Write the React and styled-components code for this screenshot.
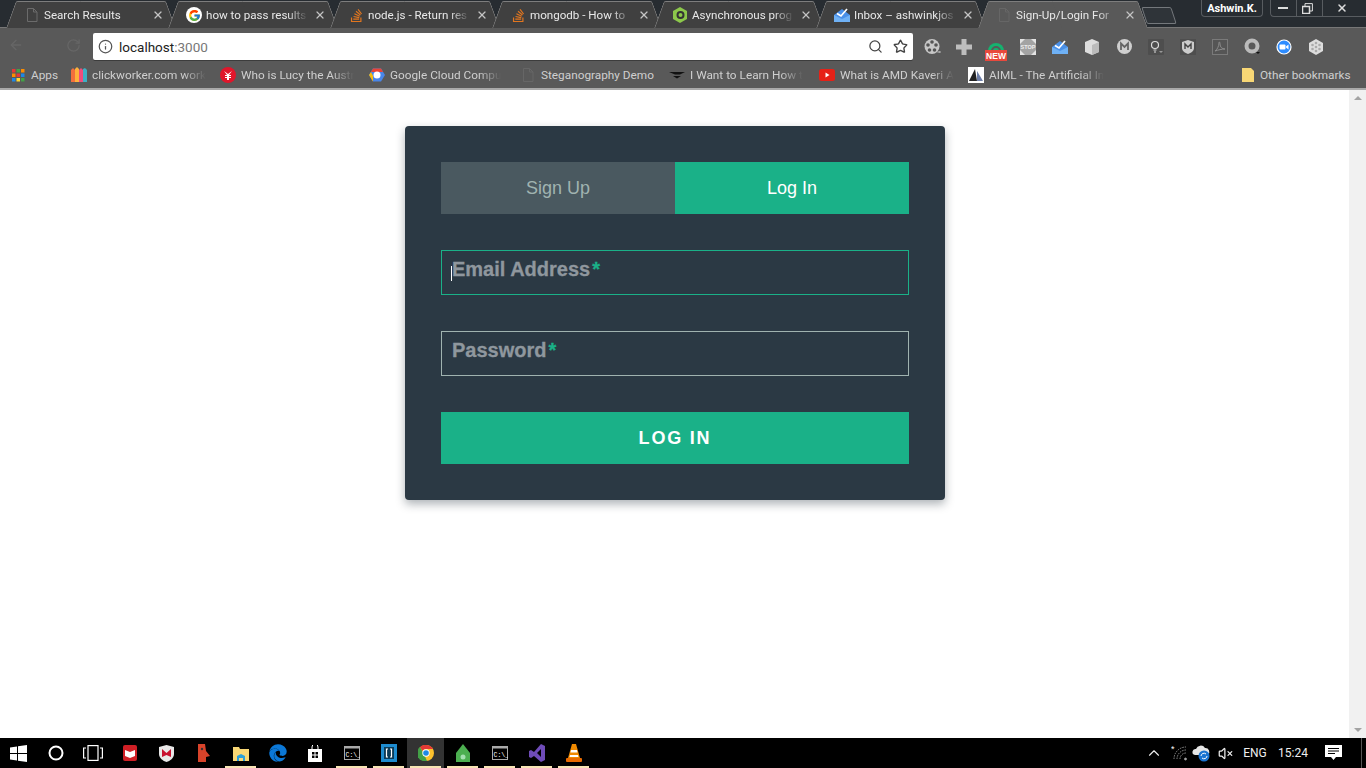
import React from 'react';
import styled, { createGlobalStyle } from 'styled-components';
import { X, Search, Star, Info, ArrowLeft, RotateCw, ChevronUp, VolumeX } from 'lucide-react';
import { FcGoogle } from 'react-icons/fc';
import { FaStackOverflow, FaEdge } from 'react-icons/fa';

const Global = createGlobalStyle`
  html, body { margin: 0; padding: 0; height: 100%; overflow: hidden; background: #fff; }
  * { box-sizing: border-box; }
  body { font-family: Roboto, "Noto Sans", sans-serif; }
`;

const Screen = styled.div`
  width: 1366px; height: 768px; display: grid; grid-template-rows: 28px 34px 28px 1fr 30px; overflow: hidden;
`;

/* ---------- tab strip ---------- */
const Strip = styled.div`
  background: #272c31; display: flex; align-items: stretch; padding-left: 6px; position: relative;
  border-bottom: 1px solid #777;
`;
const TabBox = styled.div`
  position: relative; width: 169px; margin-right: -7px; height: 28px; flex: none;
  display: flex; align-items: center; padding: 2px 0 0 18px; font-size: 11.6px; color: #e8e8e8;
  z-index: ${p => (p.$active ? 3 : 1)};
  &::before, &::after {
    content: ""; position: absolute; top: 1px; bottom: 0; width: 50%; z-index: -1;
    background: ${p => (p.$active ? '#595959' : '#404040')};
    border-top: 1px solid #7d7d7d;
  }
  &::before { left: 5px; transform: skewX(-20deg); border-left: 1px solid #7d7d7d; border-top-left-radius: 2px; }
  &::after { right: 5px; transform: skewX(20deg); border-right: 1px solid #7d7d7d; border-top-right-radius: 2px; }
`;
const TabIcon = styled.span`
  width: 16px; height: 16px; flex: none; margin-right: 4px; display: flex; align-items: center; justify-content: center;
`;
const TabTitle = styled.span`
  width: 102px; flex: none; white-space: nowrap; overflow: hidden; line-height: 16px;
  -webkit-mask-image: linear-gradient(to right, #000 80%, transparent 100%);
  mask-image: linear-gradient(to right, #000 80%, transparent 100%);
`;
const TabClose = styled.span`
  width: 12px; height: 12px; flex: none; margin-left: 6px; display: flex; color: #c4c4c4;
`;
const GoogleDot = styled.span`
  width: 16px; height: 16px; border-radius: 50%; background: #fff; display: flex; align-items: center; justify-content: center;
`;
const NewTab = styled.div`
  width: 30px; height: 17px; margin: 7px 0 0 4px; flex: none; background: #2f3439; border: 1px solid #74787c;
  border-radius: 2px; transform: skewX(18deg);
`;
const Profile = styled.div`
  margin-left: auto; width: 62px; height: 17px; border: 1px solid #585c60; border-top: 0; border-radius: 0 0 4px 4px;
  display: flex; align-items: center; justify-content: center; font-size: 11px; font-weight: 700; color: #fff; flex: none;
`;
const WinControls = styled.div`
  margin-left: 7px; width: 96px; height: 17px; flex: none; display: grid; grid-template-columns: 25px 26px 45px;
  border-left: 1px solid #585c60; border-bottom: 1px solid #585c60; border-radius: 0 0 0 4px;
`;
const WinBtn = styled.div`
  display: flex; align-items: center; justify-content: center; color: #ddd; padding-right: ${p => p.$pr || 0}px;
  & + & { border-left: 1px solid #585c60; }
`;

/* ---------- toolbar ---------- */
const Toolbar = styled.div`
  background: #595959; display: flex; align-items: center; padding-left: 1px;
`;
const NavBtn = styled.div`
  width: 29px; display: flex; justify-content: center; color: #666; flex: none;
`;
const Omnibox = styled.div`
  width: 820px; height: 27px; margin: 5px 0 0 5px; background: #fff; border-radius: 2px; flex: none; align-self: flex-start;
  display: flex; align-items: center; padding: 0 0 0 5px; font-size: 13.5px; color: #222;
  box-shadow: 0 1px 0 #3c3c3c;
`;
const InfoWrap = styled.span`
  width: 16px; height: 16px; display: flex; margin-right: 5px; color: #555;
`;
const Port = styled.span` color: #777; `;
const OmniAction = styled.span`
  width: 25px; display: flex; justify-content: center; color: #444; ${p => p.$push && 'margin-left: auto;'}
`;
const Extensions = styled.div`
  display: flex; margin: 3px 0 0 3px;
`;
const Ext = styled.div`
  width: 32px; height: 24px; display: flex; align-items: center; justify-content: center; flex: none;
`;
const GrammarSvg = styled.svg`
  margin-top: 6px; flex: none;
`;

/* ---------- bookmarks ---------- */
const Bookmarks = styled.div`
  background: #595959; display: flex; align-items: center; padding: 0 14px 0 11px; font-size: 11.8px; color: #cfcfcf;
  border-bottom: 2px solid #a9a9a9;
`;
const Bookmark = styled.div`
  width: ${p => p.$w}px; flex: none; display: flex; align-items: center; white-space: nowrap; overflow: hidden;
  ${p => p.$end && 'margin-left: auto;'}
`;
const BmIcon = styled.span`
  width: ${p => p.$w || 16}px; height: 16px; flex: none; margin-right: 5px; display: flex; align-items: center; justify-content: center;
`;
const BmLabel = styled.span`
  display: block; overflow: hidden; white-space: nowrap; max-width: ${p => (p.$fade ? '118px' : 'none')};
  ${p => p.$fade && `
    -webkit-mask-image: linear-gradient(to right, #000 80%, transparent 100%);
    mask-image: linear-gradient(to right, #000 80%, transparent 100%);
  `}
`;

/* ---------- content ---------- */
const Viewport = styled.div`
  display: grid; grid-template-columns: 1fr 17px; min-height: 0; background: #fff;
`;
const Page = styled.main`
  display: flex; justify-content: center; align-items: flex-start; padding: 36px 0 0 1px; font-family: "Liberation Sans", Arial, sans-serif;
`;
const Scrollbar = styled.div`
  background: #f1f1f1; display: flex; flex-direction: column; justify-content: space-between; align-items: center; padding: 6px 0;
`;
const Arrow = styled.span`
  width: 0; height: 0; border-left: 4px solid transparent; border-right: 4px solid transparent;
  ${p => (p.$down ? 'border-top: 4px solid #a3a3a3;' : 'border-bottom: 4px solid #a3a3a3;')}
`;
const Card = styled.form`
  width: 540px; height: 374px; padding: 36px; background: #2b3944; border-radius: 4px;
  box-shadow: 0 4px 10px 0 rgba(19, 35, 47, 0.35); display: flex; flex-direction: column; gap: 36px; flex: none;
`;
const TabRow = styled.div`
  display: grid; grid-template-columns: 1fr 1fr;
`;
const FormTab = styled.button`
  height: 52px; border: 0; padding: 0; font: 18px "Liberation Sans", Arial, sans-serif; 
  background: ${p => (p.$active ? '#1ab188' : '#4a5960')};
  color: ${p => (p.$active ? '#ffffff' : '#a0b3b0')};
`;
const Field = styled.div`
  position: relative; height: 45px; border: 1px solid ${p => (p.$focus ? '#1ab188' : '#a0b3b0')};
`;
const FieldLabel = styled.label`
  position: absolute; left: 10px; top: 4px; font-size: 20px; line-height: 28px; font-weight: 700; color: #8f979e;
  -webkit-text-stroke: 0.3px currentColor;
`;
const Req = styled.span` color: #1ab188; margin-left: 2px; `;
const Caret = styled.span`
  position: absolute; left: 9px; top: 15px; width: 1px; height: 15px; background: #fff;
`;
const Submit = styled.button`
  height: 52px; border: 0; padding: 0; background: #1ab188; color: #fff; font: 700 18px "Liberation Sans", Arial, sans-serif;
  letter-spacing: 1.8px; text-transform: uppercase;
`;

/* ---------- taskbar ---------- */
const Taskbar = styled.footer`
  background: #000; display: flex; align-items: stretch; color: #fff; font-size: 12px;
`;
const TaskCell = styled.div`
  width: ${p => p.$w || 37}px; flex: none; position: relative; display: flex; align-items: center; justify-content: center;
  ${p => p.$active && 'background: #333;'}
  ${p => p.$open && `&::after { content: ""; position: absolute; left: 3px; right: 3px; bottom: 0; height: 2px; background: #f7e4b4; }`}
`;
const Tray = styled.div`
  margin-left: auto; display: flex; align-items: center; padding-right: 0;
`;
const TrayCell = styled.div`
  width: ${p => p.$w}px; padding-right: ${p => p.$pr || 0}px; display: flex; align-items: center; justify-content: center; color: #eee; flex: none;
`;
const ShowDesktop = styled.div`
  width: 1px; height: 30px; background: #555; margin: 0 4px 0 13px;
`;

/* ---------- drawings ---------- */
const FileIcon = ({ c = '#6b6b6b' }) => (
  <svg width="14" height="16" viewBox="0 0 14 16" fill="none" stroke={c}><path d="M2.5 1.5h6l3.5 3.5v9.500h-9.500zM8.500 1.500v3.500h3.500" /></svg>
);
const NodeHex = () => (
  <svg width="16" height="16" viewBox="0 0 16 16"><path d="M8 0l7 4v8l-7 4-7-4V4z" fill="#8cc84b" /><circle cx="8.500" cy="8" r="3" fill="none" stroke="#333" strokeWidth="2" /></svg>
);
const InboxIcon = ({ s = 16 }) => (
  <svg width={s} height={s} viewBox="0 0 16 16"><path d="M0 8l8-6 8 6v7H0z" fill="#4a90e8" /><path d="M0 8l8 4 8-4v7H0z" fill="#6fb1f5" /><path d="M3 6.500l4 2.500 6-7" fill="none" stroke="#fff" strokeWidth="1.700" /></svg>
);
const AppsGrid = () => (
  <svg width="13" height="13" viewBox="0 0 13 13">
    {[['#e53935', '#43a047', '#fb8c00'], ['#fb8c00', '#e53935', '#1e88e5'], ['#1e88e5', '#fdd835', '#43a047']].map((r, y) =>
      r.map((c, x) => <rect key={`${x}${y}`} x={x * 4.500} y={y * 4.500} width="3.500" height="3.500" fill={c} />))}
  </svg>
);
const People = () => (
  <svg width="16" height="16" viewBox="0 0 16 16"><path d="M0 15V3l2-2 2 2v12z" fill="#f36f3c" /><path d="M4 15V2l2-2 2 2v13z" fill="#ffb13b" /><path d="M8 15V3l2-2 2 2v12z" fill="#ef4d7c" /><path d="M12 15V2l2-1 2 2v12z" fill="#3dafc4" /></svg>
);
const LucyIcon = () => (
  <svg width="16" height="16" viewBox="0 0 16 16"><circle cx="8" cy="8" r="8" fill="#e0162b" /><path d="M4 4l4 3 4-3-3 4h2v1H9v1h2v1H9v2H7v-2H5v-1h2V9H5V8h2z" fill="#fff" /></svg>
);
const CloudHex = () => (
  <svg width="16" height="16" viewBox="0 0 16 16"><path d="M4 1.500h8L16 8l-4 6.500H4L0 8z" fill="#4a86e8" /><path d="M4 1.500h8L14 5H2z" fill="#ea4335" /><path d="M0 8l2-3 2 4 0 5.500z" fill="#fbbc05" /><circle cx="8" cy="8" r="3.500" fill="#fff" /></svg>
);
const WantIcon = () => (
  <svg width="16" height="16" viewBox="0 0 16 16"><path d="M0 5h16l-5 2.500H6z" fill="#111" /><path d="M4 9h8l-4 2.500z" fill="#111" /></svg>
);
const YtIcon = () => (
  <svg width="16" height="12" viewBox="0 0 16 12"><rect width="16" height="12" rx="2.500" fill="#e62117" /><path d="M6.500 3.500l4 2.500-4 2.500z" fill="#fff" /></svg>
);
const AimlIcon = () => (
  <svg width="16" height="16" viewBox="0 0 16 16"><rect width="16" height="16" fill="#fff" /><path d="M7 2l2 12H1z" fill="#222" /><path d="M9 4l6 10H9z" fill="#6e7fa8" /></svg>
);
const Folder = () => (
  <svg width="12" height="14" viewBox="0 0 12 14"><path d="M0 0h9l3 3v11H0z" fill="#f8d775" /></svg>
);
const Reel = () => (
  <svg width="17" height="17" viewBox="0 0 17 17"><circle cx="8" cy="8.500" r="7.500" fill="#c7c7c7" />{[[8, 4], [4, 7], [12, 7], [5.500, 12], [10.500, 12]].map(([x, y], i) => <circle key={i} cx={x} cy={y} r="1.800" fill="#555" />)}<path d="M12 14l4.500 1v-2z" fill="#bbb" /></svg>
);
const Plus = () => (
  <svg width="16" height="16" viewBox="0 0 16 16"><path d="M5.500 0h5v5.500H16v5h-5.500V16h-5v-5.500H0v-5h5.500z" fill="#bdbdbd" /></svg>
);
const Grammar = () => (
  <GrammarSvg width="22" height="22" viewBox="0 0 22 22">
    <path d="M3 12a8 8 0 1 1 16 0z" fill="#15b26f" /><path d="M7 12a4 4 0 1 1 8 0" fill="none" stroke="#595959" strokeWidth="2" />
    <rect y="11" width="22" height="11" fill="#e8493d" />
    <text x="11" y="20" textAnchor="middle" fontFamily="Liberation Sans" fontWeight="700" fontSize="8.500" fill="#fff">NEW</text>
  </GrammarSvg>
);
const StopSign = () => (
  <svg width="16" height="16" viewBox="0 0 16 16"><rect width="16" height="16" fill="#e3e3e3" /><path d="M5 0h6l5 5v6l-5 5H5l-5-5V5z" fill="#a3a3a3" /><text x="8" y="10" textAnchor="middle" fontFamily="Liberation Sans" fontWeight="700" fontSize="5.500" fill="#eee">STOP</text></svg>
);
const Cube = () => (
  <svg width="16" height="16" viewBox="0 0 16 16"><path d="M8 0l7 3v10l-7 3-7-3V3z" fill="#ddd" /><path d="M8 6l7-3v10l-7 3z" fill="#bbb" /></svg>
);
const MCircle = () => (
  <svg width="15" height="15" viewBox="0 0 15 15"><circle cx="7.500" cy="7.500" r="7.500" fill="#cfcfcf" /><path d="M4 11V4.500l3.500 3.500L11 4.500V11" fill="none" stroke="#666" strokeWidth="1.800" /></svg>
);
const Bulb = () => (
  <svg width="16" height="16" viewBox="0 0 16 16"><rect width="16" height="16" rx="1" fill="#4e4e4e" /><circle cx="7" cy="6" r="3.500" fill="none" stroke="#ddd" strokeWidth="1.200" /><path d="M5.500 11h3M6 13h2" stroke="#ddd" /><path d="M11 12h4l-2 2z" fill="#999" /></svg>
);
const ShieldExt = () => (
  <svg width="16" height="16" viewBox="0 0 16 16"><rect width="16" height="16" fill="#4e4e4e" /><path d="M8 1l6 2v6c0 3-3 5-6 6-3-1-6-3-6-6V3z" fill="#ccc" /><path d="M5 10V5l3 3 3-3v5" fill="none" stroke="#444" strokeWidth="1.400" /></svg>
);
const PdfExt = () => (
  <svg width="16" height="16" viewBox="0 0 16 16"><rect x=".5" y=".5" width="15" height="15" fill="#555" stroke="#7a7a7a" /><path d="M3 12c2-1 4-5 4-8 0-2 1-1 1 1 0 3 2 5 5 5-3 0-7 1-10 2z" fill="none" stroke="#8b8b8b" /></svg>
);
const Ring = () => (
  <svg width="17" height="17" viewBox="0 0 17 17"><circle cx="8" cy="8" r="5.500" fill="none" stroke="#bbb" strokeWidth="4" /><path d="M12 14h4l-2 2z" fill="#111" /></svg>
);
const ZoomExt = () => (
  <svg width="16" height="16" viewBox="0 0 16 16"><circle cx="8" cy="8" r="7" fill="#2d8cff" stroke="#fff" strokeWidth="1.200" /><rect x="3.500" y="5.500" width="6" height="5" rx="1" fill="#fff" /><path d="M10 7.500l2.500-2v5l-2.500-2z" fill="#fff" /></svg>
);
const Flower = () => (
  <svg width="16" height="16" viewBox="0 0 16 16"><path d="M8 0l7 4v8l-7 4-7-4V4z" fill="#ddd" />{[[8, 4], [4.500, 6], [11.500, 6], [4.500, 10], [11.500, 10], [8, 12], [8, 8]].map(([x, y], i) => <circle key={i} cx={x} cy={y} r="1.300" fill="#aaa" />)}</svg>
);
const WinLogo = () => (
  <svg width="17" height="17" viewBox="0 0 17 17" fill="#fff"><path d="M0 2.500l7-1V8H0zM8 1.300L17 0v8H8zM0 9h7v6.500l-7-1zM8 9h9v8l-9-1.300z" /></svg>
);
const Cortana = () => (
  <svg width="16" height="16" viewBox="0 0 16 16"><circle cx="8" cy="8" r="6.500" fill="none" stroke="#fff" strokeWidth="2" /></svg>
);
const TaskView = () => (
  <svg width="20" height="16" viewBox="0 0 20 16" fill="none" stroke="#fff" strokeWidth="1.200"><rect x="5" y=".6" width="10" height="14.800" /><path d="M3 3H.6v10H3M17 3h2.400v10H17" /></svg>
);
const RedMail = () => (
  <svg width="14" height="16" viewBox="0 0 14 16"><rect width="14" height="16" rx="2" fill="#cf1f25" /><path d="M2 5l5 2 5-2v6l-5 2-5-2z" fill="#fff" /></svg>
);
const McAfee = () => (
  <svg width="15" height="17" viewBox="0 0 15 17"><path d="M7.500 0L15 2v7c0 4-4 7-7.500 8C4 16 0 13 0 9V2z" fill="#e8e8e8" /><path d="M3 12V4l4.500 4L12 4v8l-4.500-2z" fill="#c8102e" /></svg>
);
const RedFigure = () => (
  <svg width="13" height="18" viewBox="0 0 13 18"><path d="M1 0h7l1 7 4 5-4 1v5H1z" fill="#d8432a" /><circle cx="5" cy="5" r="1.200" fill="#333" /></svg>
);
const Explorer = () => (
  <svg width="16" height="15" viewBox="0 0 16 15"><path d="M0 1h6l1 2h9v12H0z" fill="#f8d775" /><path d="M4 15V10l4-2 4 2v5h-2v-3H6v3z" fill="#2b9fd8" /></svg>
);
const Store = () => (
  <svg width="14" height="17" viewBox="0 0 14 17"><path d="M0 4h14v13H0z" fill="#fff" /><path d="M4 4V2a3 3 0 0 1 6 0v2" fill="none" stroke="#fff" /><path d="M4 7h2.500v2.500H4zM7.500 7H10v2.500H7.500zM4 10.500h2.500V13H4zM7.500 10.500H10V13H7.500z" fill="#000" /></svg>
);
const Cmd = () => (
  <svg width="16" height="14" viewBox="0 0 16 14"><rect x=".5" y=".5" width="15" height="13" fill="#000" stroke="#aaa" /><rect x="0" y="0" width="16" height="2.500" fill="#aaa" /><text x="1.500" y="10.500" fontFamily="Liberation Mono" fontSize="6.500" fill="#fff">C:\_</text></svg>
);
const Brackets = () => (
  <svg width="16" height="18" viewBox="0 0 16 18"><rect width="16" height="18" fill="#1e8ccf" /><rect x="3" y="3" width="10" height="12" fill="#0c3b57" /><path d="M7 5H5.500v8H7M9 5h1.500v8H9" fill="none" stroke="#fff" strokeWidth="1.200" /></svg>
);
const ChromeIcon = () => (
  <svg width="16" height="16" viewBox="0 0 16 16"><circle cx="8" cy="8" r="8" fill="#fbc02d" /><path d="M8 0a8 8 0 0 1 7 4H8a4 4 0 0 0-3.500 2L2 2a8 8 0 0 1 6-2z" fill="#e53935" /><path d="M2 2l4 7 3 7A8 8 0 0 1 2 2z" fill="#43a047" /><circle cx="8" cy="8" r="3.700" fill="#fff" /><circle cx="8" cy="8" r="2.800" fill="#1e88e5" /></svg>
);
const GreenHouse = () => (
  <svg width="16" height="18" viewBox="0 0 16 18"><path d="M8 0l7 9v9H1V9z" fill="#4caf50" /><circle cx="8" cy="13" r="2.500" fill="#a5e0b0" /></svg>
);
const VsIcon = () => (
  <svg width="16" height="18" viewBox="0 0 16 18"><path d="M12 0l4 2v14l-4 2-7-6-3 2-2-1V7l2-1 3 2zM12 5L8 9l4 4z" fill="#6f4cb8" fillRule="evenodd" /></svg>
);
const Vlc = () => (
  <svg width="16" height="18" viewBox="0 0 16 18"><path d="M6 0h4l4 14H2z" fill="#f08a00" /><path d="M5 6h6l.6 2.500H4.400zM4 11h8l.5 2h-9z" fill="#fff" /><rect y="14" width="16" height="4" rx="1" fill="#e86a00" /></svg>
);
const WifiTray = () => (
  <svg width="18" height="16" viewBox="0 0 18 16" fill="none" stroke="#8f8f8f"><path d="M3 14a12 12 0 0 1 12-12M6 14a9 9 0 0 1 9-9M9 14a6 6 0 0 1 6-6" strokeDasharray="1.500 1" /><circle cx="14.500" cy="14" r="1" fill="#ccc" /><text x="0" y="7" fontFamily="Liberation Sans" fontSize="9" fill="#fff" stroke="none">*</text></svg>
);
const CloudTray = () => (
  <svg width="20" height="17" viewBox="0 0 20 17"><path d="M3 10a3 3 0 0 1 1-6 5 5 0 0 1 9-1 4 4 0 0 1 3 7z" fill="#e6e6e6" /><circle cx="12" cy="11" r="5.500" fill="#1a73d0" /><path d="M9 11a3 3 0 0 1 5-2M15 11a3 3 0 0 1-5 2" fill="none" stroke="#fff" /></svg>
);
const Notify = () => (
  <svg width="17" height="16" viewBox="0 0 17 16"><path d="M0 0h17v12h-6l-2.500 3L6 12H0z" fill="#fff" /><path d="M3 3.500h11M3 6h11M3 8.500h7" stroke="#000" /></svg>
);

const tabs = [
  { t: 'Search Results', i: <FileIcon /> },
  { t: 'how to pass results', i: <GoogleDot><FcGoogle size={13} /></GoogleDot> },
  { t: 'node.js - Return res', i: <FaStackOverflow size={15} color="#e2761f" /> },
  { t: 'mongodb - How to', i: <FaStackOverflow size={15} color="#e2761f" /> },
  { t: 'Asynchronous prog', i: <NodeHex /> },
  { t: 'Inbox – ashwinkjos', i: <InboxIcon /> },
  { t: 'Sign-Up/Login For', i: <FileIcon c="#666" />, active: true },
];
const marks = [
  { t: 'Apps', i: <AppsGrid />, w: 60, small: true },
  { t: 'clickworker.com work', i: <People />, w: 149 },
  { t: 'Who is Lucy the Austr', i: <LucyIcon />, w: 149 },
  { t: 'Google Cloud Compu', i: <CloudHex />, w: 151 },
  { t: 'Steganography Demo', i: <FileIcon c="#666" />, w: 149, solid: true },
  { t: 'I Want to Learn How t', i: <WantIcon />, w: 150 },
  { t: 'What is AMD Kaveri A', i: <YtIcon />, w: 149 },
  { t: 'AIML - The Artificial In', i: <AimlIcon />, w: 149 },
];
const exts = [<Reel />, <Plus />, <Grammar />, <StopSign />, <InboxIcon />, <Cube />, <MCircle />, <Bulb />, <ShieldExt />, <PdfExt />, <Ring />, <ZoomExt />, <Flower />];
const apps = [
  { i: <RedMail /> }, { i: <McAfee /> }, { i: <RedFigure /> }, { i: <Explorer />, open: true }, { i: <FaEdge size={18} color="#0b78d7" /> },
  { i: <Store /> }, { i: <Cmd />, open: true }, { i: <Brackets />, open: true }, { i: <ChromeIcon />, open: true, active: true },
  { i: <GreenHouse />, open: true }, { i: <Cmd />, open: true }, { i: <VsIcon />, open: true }, { i: <Vlc />, open: true },
];

export default function App() {
  return (
    <Screen>
      <Global />
      <Strip>
        {tabs.map(x => (
          <TabBox key={x.t} $active={x.active}>
            <TabIcon>{x.i}</TabIcon>
            <TabTitle>{x.t}</TabTitle>
            <TabClose><X size={12} strokeWidth={2.4} /></TabClose>
          </TabBox>
        ))}
        <NewTab />
        <Profile>Ashwin.K.</Profile>
        <WinControls>
          <WinBtn $pr={2}><svg width="10" height="3"><rect width="10" height="2" fill="#ddd" /></svg></WinBtn>
          <WinBtn $pr={4}><svg width="11" height="11" fill="none" stroke="#ddd"><rect x=".5" y="3.500" width="7" height="7" strokeWidth="1.500" /><path d="M3 3V.6h7.400V8H8" /></svg></WinBtn>
          <WinBtn $pr={6}><X size={12} strokeWidth={3} /></WinBtn>
        </WinControls>
      </Strip>
      <Toolbar>
        <NavBtn><ArrowLeft size={16} /></NavBtn>
        <NavBtn />
        <NavBtn><RotateCw size={15} /></NavBtn>
        <Omnibox>
          <InfoWrap><Info size={15} /></InfoWrap>
          localhost<Port>:3000</Port>
          <OmniAction $push><Search size={15} /></OmniAction>
          <OmniAction><Star size={15} strokeWidth={2.2} /></OmniAction>
        </Omnibox>
        <Extensions>
          {exts.map((e, i) => <Ext key={i}>{e}</Ext>)}
        </Extensions>
      </Toolbar>
      <Bookmarks>
        {marks.map(m => (
          <Bookmark key={m.t} $w={m.w}>
            <BmIcon $w={m.small ? 15 : 16}>{m.i}</BmIcon>
            <BmLabel $fade={!m.small && !m.solid}>{m.t}</BmLabel>
          </Bookmark>
        ))}
        <Bookmark $end $w={111}>
          <BmIcon $w={14}><Folder /></BmIcon>
          <BmLabel>Other bookmarks</BmLabel>
        </Bookmark>
      </Bookmarks>
      <Viewport>
        <Page>
          <Card onSubmit={e => e.preventDefault()}>
            <TabRow>
              <FormTab type="button">Sign Up</FormTab>
              <FormTab type="button" $active>Log In</FormTab>
            </TabRow>
            <Field $focus>
              <FieldLabel>Email Address<Req>*</Req></FieldLabel>
              <Caret />
            </Field>
            <Field>
              <FieldLabel>Password<Req>*</Req></FieldLabel>
            </Field>
            <Submit type="submit">Log In</Submit>
          </Card>
        </Page>
        <Scrollbar><Arrow /><Arrow $down /></Scrollbar>
      </Viewport>
      <Taskbar>
        <TaskCell><WinLogo /></TaskCell>
        <TaskCell><Cortana /></TaskCell>
        <TaskCell><TaskView /></TaskCell>
        {apps.map((a, i) => (
          <TaskCell key={i} $open={a.open} $active={a.active}>{a.i}</TaskCell>
        ))}
        <Tray>
          <TrayCell $w={30}><ChevronUp size={18} strokeWidth={1.5} /></TrayCell>
          <TrayCell $w={22}><WifiTray /></TrayCell>
          <TrayCell $w={22}><CloudTray /></TrayCell>
          <TrayCell $w={29} $pr={5}><VolumeX size={15} /></TrayCell>
          <TrayCell $w={26}>ENG</TrayCell>
          <TrayCell $w={50}>15:24</TrayCell>
          <TrayCell $w={30}><Notify /></TrayCell>
          <ShowDesktop />
        </Tray>
      </Taskbar>
    </Screen>
  );
}
